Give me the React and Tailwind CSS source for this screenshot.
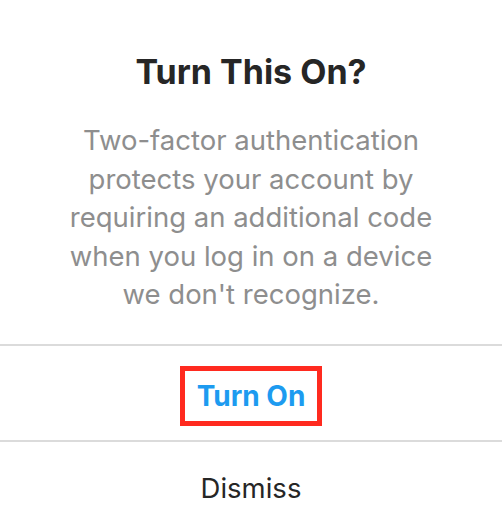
import React from 'react';

const TwoFactorPrompt = () => {
  return (
    <div className="w-full h-[526px] bg-white overflow-hidden flex flex-col" style={{ fontFamily: 'Inter, "Noto Sans", sans-serif' }}>
      <div className="shrink-0 h-[344px] flex flex-col items-center pt-[51px] px-6">
        <h1 className="text-[34px] leading-[41px] font-bold text-[#262626]">Turn This On?</h1>
        <p className="mt-[29px] text-[27.5px] leading-[38.6px] text-[#8e8e8e] text-center w-[380px]">
          Two-factor authentication protects your account by requiring an additional code when you log in on a device we don't recognize.
        </p>
      </div>
      <div className="shrink-0 border-t-2 border-[#dbdbdb] h-[96px] flex items-center justify-center pt-[6px]">
        <button className="border-[5px] border-[#ff2a1f] w-[142px] h-[60px] text-[28px] font-bold text-[#1d9bf0]">Turn On</button>
      </div>
      <div className="shrink-0 border-t-2 border-[#dbdbdb] h-[96px] flex items-center justify-center">
        <button className="text-[27.5px] text-[#262626]">Dismiss</button>
      </div>
    </div>
  );
};

export default function App() {
  return <TwoFactorPrompt />;
}
